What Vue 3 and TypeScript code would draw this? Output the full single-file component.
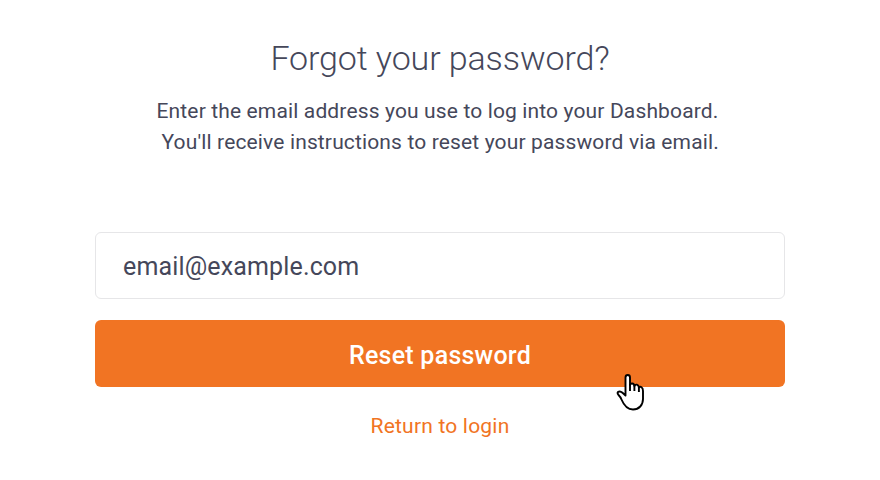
<script setup lang="ts">
import { ref } from 'vue'

const email = ref('email@example.com')
</script>

<template>
  <main class="page">
    <h1 class="title">Forgot your password?</h1>
    <p class="intro">
      <span class="line">Enter the email address you use to log into your Dashboard.</span>
      <span class="line second">You'll receive instructions to reset your password via email.</span>
    </p>
    <form class="form" @submit.prevent>
      <input v-model="email" class="field" type="text" aria-label="Email" />
      <button class="submit" type="submit">Reset password</button>
    </form>
    <a class="back" href="#">Return to login</a>
    <svg class="pointer" viewBox="0 0 28 38" aria-hidden="true">
      <path
        d="M9.500 22.500V4.500Q9.500 2 11.800 2Q14 2 14 4.500V12Q14.400 10.300 16.200 10.500Q18.200 10.700 18.400 13Q19.200 11.300 20.900 11.700Q22.700 12.200 22.900 14.500Q24 13.300 25.500 14.300Q27 15.300 27 18V26C27 32 23 36.500 17 36.500C11 36.500 8 32.500 5.500 26.500Q4.500 24 2.500 22Q1 20 2 19Q4 17.500 6.500 19.800L9.500 22.500Z"
      />
      <path d="M14 11V18M18.400 12V18M22.900 14V19" />
    </svg>
  </main>
</template>

<style>
body {
  margin: 0;
  background: #fff;
}
</style>

<style scoped>
.page {
  position: relative;
  box-sizing: border-box;
  width: 880px;
  height: 480px;
  padding: 38px 95px 0;
  display: flex;
  flex-direction: column;
  align-items: center;
  background: #fff;
  color: #45475a;
  font-family: Roboto, sans-serif;
}
.title {
  margin: 0;
  font-size: 34px;
  font-weight: 300;
  line-height: 41px;
  letter-spacing: -0.1px;
  white-space: nowrap;
}
.intro {
  margin: 17px 0 0;
  font-size: 21px;
  line-height: 31px;
  letter-spacing: 0.14px;
  white-space: nowrap;
}
.line {
  display: block;
  margin-right: 5px;
}
.second {
  margin-right: 0;
  padding-left: 5px;
}
.form {
  display: flex;
  flex-direction: column;
  gap: 21px;
  width: 690px;
  margin-top: 74px;
}
.field {
  box-sizing: border-box;
  height: 67px;
  padding: 2px 27px 0;
  border: 1px solid #e6e6e8;
  border-radius: 6px;
  outline: none;
  color: inherit;
  font: 400 25px Roboto, sans-serif;
  letter-spacing: 0.15px;
}
.submit {
  height: 67px;
  padding: 4px 0 0;
  border: 0;
  border-radius: 6px;
  background: #f17423;
  color: #fff;
  font: 500 25px Roboto, sans-serif;
  letter-spacing: 0.25px;
}
.back {
  margin-top: 26px;
  color: #f17423;
  font-size: 21px;
  line-height: 26px;
  letter-spacing: 0.2px;
  text-decoration: none;
}
.pointer {
  position: absolute;
  left: 616px;
  top: 373px;
  width: 28px;
  height: 38px;
  fill: #fff;
  stroke: #000;
  stroke-width: 1.9;
  stroke-linejoin: round;
}
</style>
